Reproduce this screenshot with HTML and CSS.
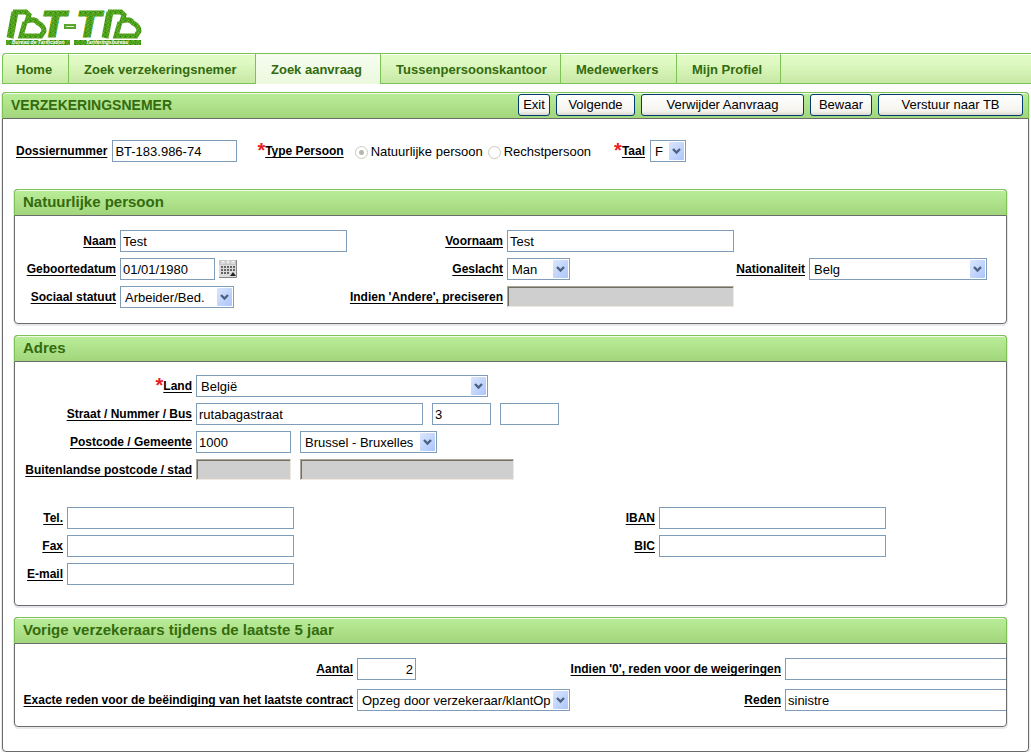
FILE: index.html
```html
<!DOCTYPE html>
<html lang="nl">
<head>
<meta charset="utf-8">
<title>BT-TB - Verzekeringsnemer</title>
<link rel="stylesheet" href="styles.css">
</head>
<body>
<header class="site-header">
  <svg class="logo" width="140" height="40" viewBox="0 0 140 40" role="img" aria-label="BT-TB">
    <defs>
      <pattern id="grain" width="5" height="4" patternUnits="userSpaceOnUse">
        <rect width="5" height="4" fill="#48a01a"/>
        <rect x="1" width="1" height="1" fill="#74b830"/>
        <rect x="3" y="1" width="1" height="1" fill="#7a9a20"/>
        <rect x="0" y="2" width="1" height="1" fill="#5cb236"/>
        <rect x="2" y="3" width="1" height="1" fill="#8fae2c"/>
        <rect x="4" y="3" width="1" height="1" fill="#2a8414"/>
      </pattern>
      <g id="emblem" fill="none" stroke="url(#grain)">
        <path d="M4 29L9 3" stroke-width="7"/>
        <path d="M7 3H20L23 6L21 12Q29 9 32 14Q38 17 38 22L35 27H15L19 13" stroke-width="5"/>
      </g>
    </defs>
    <use href="#emblem"/>
    <use href="#emblem" x="95"/>
    <g class="logo-type" fill="url(#grain)" stroke="url(#grain)" stroke-width="1">
      <text x="36" y="28">T</text>
      <text x="71" y="28">T</text>
    </g>
    <rect x="58" y="15" width="12" height="5" fill="#5aa62c"/>
    <rect x="60" y="17" width="8" height="1" fill="#e2efcf"/>
    <rect x="0" y="31" width="64" height="5" fill="url(#grain)"/>
    <rect x="68" y="31" width="67" height="5" fill="url(#grain)"/>
    <g class="logo-caption">
      <text x="6" y="35">Bureau de Tarification</text>
      <text x="80" y="35">Tariferingsbureau</text>
    </g>
  </svg>
</header>

<nav class="tabs">
  <a class="tab tab-home" href="#">Home</a>
  <a class="tab tab-holder" href="#">Zoek verzekeringsnemer</a>
  <a class="tab tab-request active" href="#" aria-current="page">Zoek aanvraag</a>
  <a class="tab tab-office" href="#">Tussenpersoonskantoor</a>
  <a class="tab tab-staff" href="#">Medewerkers</a>
  <a class="tab tab-profile" href="#">Mijn Profiel</a>
</nav>

<main class="panel page-panel">
  <div class="panel-head">
    <h1 class="panel-title page-title">VERZEKERINGSNEMER</h1>
    <div class="actions">
      <button type="button" class="btn btn-xs">Exit</button>
      <button type="button" class="btn btn-m">Volgende</button>
      <button type="button" class="btn btn-xl">Verwijder Aanvraag</button>
      <button type="button" class="btn btn-s">Bewaar</button>
      <button type="button" class="btn btn-l">Verstuur naar TB</button>
    </div>
  </div>

  <form class="page-body">
    <div class="top-row">
      <div class="pair">
        <label class="label" for="dossier">Dossiernummer</label>
        <input class="field w-dossier" id="dossier" type="text" value="BT-183.986-74">
      </div>
      <div class="pair" role="radiogroup" aria-labelledby="type-label">
        <span class="label-wrap"><span class="required">*</span><span class="label" id="type-label">Type Persoon</span></span>
        <span class="choices">
          <input class="radio" type="radio" name="type" id="natural" checked disabled>
          <label class="choice" for="natural">Natuurlijke persoon</label>
          <input class="radio radio-next" type="radio" name="type" id="legal" disabled>
          <label class="choice" for="legal">Rechstpersoon</label>
        </span>
      </div>
      <div class="pair">
        <span class="label-wrap"><span class="required">*</span><label class="label" for="taal">Taal</label></span>
        <select class="field select w-taal" id="taal"><option>F</option></select>
      </div>
    </div>

    <section class="panel">
      <div class="panel-head"><h2 class="panel-title">Natuurlijke persoon</h2></div>
      <div class="panel-body">
        <div class="grid person-grid">
          <label class="label row-start" for="naam">Naam</label>
          <input class="field" id="naam" type="text" value="Test">
          <label class="label" for="voornaam">Voornaam</label>
          <input class="field" id="voornaam" type="text" value="Test">

          <label class="label row-start" for="geboorte">Geboortedatum</label>
          <div class="fields date-fields">
            <input class="field w-short" id="geboorte" type="text" value="01/01/1980">
            <button type="button" class="calendar" aria-label="Kalender">
              <svg width="18" height="18" viewBox="0 0 18 18">
                <rect width="18" height="18" fill="#dcdcdc"/>
                <path d="M0 0H18V5H0Z" fill="#c6c6c6"/>
                <path d="M3 4V1L4 2L5 1V4M8 1H10V3H8ZM13 4V1L14 2L15 1V4" fill="none" stroke="#f4f4f4"/>
                <path d="M2 7H17M2 10H17M2 13H11" stroke="#666" stroke-width="2" stroke-dasharray="2 1"/>
                <path d="M11 16H17L14 12Z" fill="#222"/>
                <path d="M0 17.5H17.5V0" fill="none" stroke="#888"/>
              </svg>
            </button>
          </div>
          <label class="label" for="geslacht">Geslacht</label>
          <select class="field select w-gender" id="geslacht"><option>Man</option></select>
          <label class="label" for="nationaliteit">Nationaliteit</label>
          <select class="field select" id="nationaliteit"><option>Belg</option></select>

          <label class="label row-start" for="statuut">Sociaal statuut</label>
          <select class="field select w-status" id="statuut"><option>Arbeider/Bed.</option></select>
          <label class="label" for="andere">Indien 'Andere', preciseren</label>
          <input class="field" id="andere" type="text" disabled>
        </div>
      </div>
    </section>

    <section class="panel">
      <div class="panel-head"><h2 class="panel-title">Adres</h2></div>
      <div class="panel-body address-body">
        <div class="grid address-grid">
          <span class="label-wrap"><span class="required">*</span><label class="label" for="land">Land</label></span>
          <select class="field select w-country" id="land"><option>België</option></select>

          <label class="label" for="straat">Straat / Nummer / Bus</label>
          <div class="fields">
            <input class="field w-long" id="straat" type="text" value="rutabagastraat">
            <input class="field w-tiny" type="text" value="3" aria-label="Nummer">
            <input class="field w-tiny" type="text" aria-label="Bus">
          </div>

          <label class="label" for="postcode">Postcode / Gemeente</label>
          <div class="fields">
            <input class="field w-short" id="postcode" type="text" value="1000">
            <select class="field select w-city" aria-label="Gemeente"><option>Brussel - Bruxelles</option></select>
          </div>

          <label class="label" for="buitenland">Buitenlandse postcode / stad</label>
          <div class="fields">
            <input class="field w-short" id="buitenland" type="text" disabled>
            <input class="field w-foreign" type="text" aria-label="Buitenlandse stad" disabled>
          </div>
        </div>

        <div class="grid contact-grid">
          <label class="label" for="tel">Tel.</label>
          <input class="field" id="tel" type="text">
          <label class="label" for="iban">IBAN</label>
          <input class="field" id="iban" type="text">
          <label class="label" for="fax">Fax</label>
          <input class="field" id="fax" type="text">
          <label class="label" for="bic">BIC</label>
          <input class="field" id="bic" type="text">
          <label class="label" for="email">E-mail</label>
          <input class="field" id="email" type="text">
        </div>
      </div>
    </section>

    <section class="panel">
      <div class="panel-head"><h2 class="panel-title">Vorige verzekeraars tijdens de laatste 5 jaar</h2></div>
      <div class="panel-body">
        <div class="grid history-grid">
          <label class="label" for="aantal">Aantal</label>
          <input class="field w-tiny number" id="aantal" type="text" value="2">
          <label class="label" for="weigering">Indien '0', reden voor de weigeringen</label>
          <input class="field" id="weigering" type="text">
          <label class="label" for="exact">Exacte reden voor de beëindiging van het laatste contract</label>
          <select class="field select" id="exact"><option>Opzeg door verzekeraar/klantOp</option></select>
          <label class="label" for="reden">Reden</label>
          <input class="field" id="reden" type="text" value="sinistre">
        </div>
      </div>
    </section>
  </form>
</main>
</body>
</html>
```

FILE: styles.css
```css
* {
  box-sizing: border-box;
}

body {
  margin: 0;
  background: #fff;
  color: #000;
  font: 13px/16px "Liberation Sans", Arial, sans-serif;
}

.site-header {
  height: 53px;
  padding: 9px 6px 0;
}

.logo {
  display: block;
  overflow: visible;
}

.logo-type {
  font: italic bold 36px "DejaVu Sans", sans-serif;
}

.logo-caption {
  fill: #fff;
  font: italic bold 5px "Liberation Sans", sans-serif;
}

/* Navigation */
.tabs {
  display: flex;
  height: 31px;
  margin-left: 2px;
  border: 1px solid #7cc254;
  border-right: 0;
  border-radius: 4px 0 0 0;
  background: linear-gradient(#e4fcc8, #dff9c2 30%, #c6e8a4);
  box-shadow: inset 0 1px #fff;
}

.tab {
  display: flex;
  align-items: center;
  padding: 2px 0 0 13px;
  border-right: 1px solid #7cc254;
  color: #336b0e;
  font-size: 13px;
  font-weight: bold;
  text-decoration: none;
  white-space: nowrap;
}

.tab.active {
  margin-bottom: -1px;
  background: linear-gradient(#f7fdf0, #ebf8de);
}

.tab-home { width: 66px; }
.tab-holder { width: 187px; padding-left: 15px; }
.tab-request { width: 125px; padding-left: 15px; }
.tab-office { width: 180px; padding-left: 15px; }
.tab-staff { width: 116px; padding-left: 15px; }
.tab-profile { width: 104px; padding-left: 15px; }

/* Panels */
.panel {
  border: 1px solid #6b6b6b;
  border-radius: 4px;
  box-shadow: 0 2px #e6e8ec, 1px 1px #e6e8ec, -1px 0 #e6e8ec;
}

.page-panel {
  margin: 8px 2px 0;
}

.panel-head {
  display: flex;
  align-items: center;
  justify-content: space-between;
  height: 27px;
  margin: -1px -1px 0;
  padding: 0 5px 1px 8px;
  border: 1px solid #7cc254;
  border-bottom-color: #6b6b6b;
  border-radius: 4px 4px 0 0;
  background: linear-gradient(#baed98, #a2d67c);
  box-shadow: inset 0 1px #f2fbea;
}

.panel-title {
  margin: 0;
  color: #336b0e;
  font-size: 15px;
  line-height: 16px;
}

.page-title {
  font-size: 14px;
}

.actions {
  display: flex;
  gap: 6px;
}

.btn {
  height: 22px;
  padding: 0;
  border: 1px solid #003c74;
  border-radius: 3px;
  background: linear-gradient(#fff, #f4f3ee 80%, #dcd8d0);
  color: #000;
  font: inherit;
}

.btn-xs { width: 32px; }
.btn-s { width: 62px; }
.btn-m { width: 79px; }
.btn-l { width: 145px; }
.btn-xl { width: 163px; }

.page-body {
  display: flex;
  flex-direction: column;
  gap: 11px;
  padding: 21px 21px 24px 11px;
}

.panel-body {
  overflow: hidden;
  padding: 14px 13px 15px;
}

.address-body {
  padding: 13px 13px 20px;
}

/* Form rows */
.top-row {
  display: flex;
  gap: 20px;
  margin-bottom: 16px;
  padding-left: 2px;
}

.pair,
.fields {
  display: flex;
  align-items: center;
}

.pair {
  gap: 5px;
}

.fields {
  gap: 9px;
}

.date-fields {
  gap: 4px;
}

.grid {
  display: grid;
  align-items: center;
  gap: 6px 4px;
}

.person-grid { grid-template-columns: 88px 227px 152px 227px 67px 178px; }
.address-grid { grid-template-columns: 164px auto; }
.history-grid { grid-template-columns: 325px 213px 207px 227px; row-gap: 9px; }

.contact-grid {
  grid-template-columns: 35px 227px 357px 227px;
  margin-top: 27px;
}

.row-start {
  grid-column-start: 1;
}

.label {
  justify-self: end;
  font-size: 12px;
  font-weight: bold;
  text-decoration: underline 1px;
  text-decoration-skip-ink: none;
  text-underline-offset: 2px;
  white-space: nowrap;
}

.label-wrap {
  display: flex;
  align-items: center;
  justify-content: flex-end;
}

.required {
  height: 16px;
  color: #ed1c24;
  font-size: 20px;
  font-weight: bold;
  line-height: 14px;
}

.field {
  width: 100%;
  height: 22px;
  margin: 0;
  padding: 0 2px;
  border: 1px solid #7f9db9;
  border-radius: 0;
  background: #fff;
  color: #000;
  font: inherit;
}

.field:disabled {
  align-self: start;
  height: 21px;
  border-color: #aca899 #f1e9e0 #f1e9e0 #aca899;
  background: #cfcfcf;
  box-shadow: inset 1px 1px #716f64;
}

.select {
  appearance: none;
  padding: 2px 18px 0 4px;
  background: #fff url("data:image/svg+xml,%3Csvg xmlns='http://www.w3.org/2000/svg' width='15' height='18'%3E%3Cdefs%3E%3ClinearGradient id='g' x2='1' y2='1'%3E%3Cstop stop-color='%23dbe6fd'/%3E%3Cstop offset='1' stop-color='%23abc5fb'/%3E%3C/linearGradient%3E%3C/defs%3E%3Crect width='15' height='18' rx='1' fill='url(%23g)'/%3E%3Cpath d='M4 7l3.5 3.5L11 7' fill='none' stroke='%234d6185' stroke-width='2.4'/%3E%3C/svg%3E") no-repeat right 1px center;
}

.number {
  text-align: right;
}

.w-taal { width: 36px; }
.w-tiny { width: 59px; }
.w-gender { width: 63px; }
.w-short { width: 95px; }
.w-status { width: 114px; }
.w-dossier { width: 125px; }
.w-city { width: 137px; }
.w-foreign { width: 214px; }
.w-long { width: 227px; }
.w-country { width: 292px; }

.choices {
  display: flex;
  align-items: center;
  margin: 2px 3px 0 6px;
}

.radio {
  appearance: none;
  width: 13px;
  height: 13px;
  margin: 0 3px 0 0;
  border: 1px solid #cac8bb;
  border-radius: 50%;
  background: #fff;
}

.radio:checked {
  background: radial-gradient(circle, #b8b6aa 2px, #fff 3px);
}

.radio-next {
  margin-left: 5px;
}

.calendar {
  display: block;
  padding: 0;
  border: 0;
  background: none;
}

.calendar svg {
  display: block;
}
```
